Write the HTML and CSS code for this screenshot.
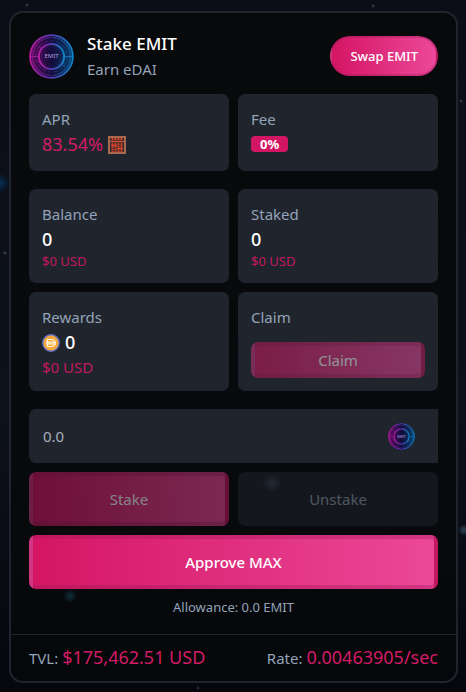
FILE: index.html
```html
<!DOCTYPE html>
<html lang="en">
<head>
    <meta charset="UTF-8">
    <meta name="viewport" content="width=device-width, initial-scale=1.0">
    <title>Stake EMIT</title>

    <link rel="stylesheet" href="styles.css">
</head>
<body>

    <!-- shared coin logo -->
    <svg class="defs" width="0" height="0" aria-hidden="true">
        <defs>
            <linearGradient id="neon" x1="0" x2="1" y1="0" y2="0">
                <stop offset="0" stop-color="#b81ca0"/>
                <stop offset="0.45" stop-color="#5a35a8"/>
                <stop offset="1" stop-color="#0e84c4"/>
            </linearGradient>
            <linearGradient id="disc" x1="0" x2="1" y1="0" y2="0">
                <stop offset="0" stop-color="#5e0c63"/>
                <stop offset="0.5" stop-color="#120c3a"/>
                <stop offset="1" stop-color="#063d6a"/>
            </linearGradient>
            <symbol id="emit" viewBox="0 0 45 45">
                <circle cx="22.5" cy="22.5" r="22.2" fill="url(#disc)"/>
                <g fill="none" stroke="url(#neon)">
                    <circle cx="22.5" cy="22.5" r="21.4" stroke-width="1.6"/>
                    <circle cx="22.5" cy="22.5" r="19" stroke-width="1.6" stroke-dasharray="3 0.5" opacity="0.5"/>
                    <circle cx="22.5" cy="22.5" r="15.6" stroke-width="0.8" stroke-dasharray="4 2" opacity="0.5"/>
                    <circle cx="22.5" cy="22.5" r="12.6" stroke-width="2"/>
                    <circle cx="22.5" cy="22.5" r="10" stroke-width="1" stroke-dasharray="1 2" opacity="0.5"/>
                    <path d="M1 22.5h8M36 22.5h8M13 15l-4-3M32 30l4 3" stroke-width="0.8"/>
                </g>
                <text x="22.5" y="24.4" text-anchor="middle" class="coin-text">EMIT</text>
            </symbol>
        </defs>
    </svg>

    <main class="card">
        <div class="content">
            <header class="head">
                <svg class="logo" role="img" aria-label="EMIT"><use href="#emit"/></svg>
                <div class="titles">
                    <h1>Stake EMIT</h1>
                    <p>Earn eDAI</p>
                </div>
                <button class="btn btn-swap" type="button">Swap EMIT</button>
            </header>

            <section class="grid">
                <div class="box">
                    <h2>APR</h2>
                    <p class="value pink">83.54%
                        <svg class="abacus" viewBox="0 0 18 18" role="img" aria-label="abacus">
                            <rect x="1" y="1" width="16" height="16" fill="#34292b" stroke="#a9694e" stroke-width="2"/>
                            <path d="M2 5.5h14" stroke="#a9694e"/>
                            <path d="M4.5 2v14M7.5 2v14M10.5 2v14M13.5 2v14" stroke="#d8432c" stroke-width="2" stroke-dasharray="2 0.6"/>
                            <path d="M3 9.5h6M9 12.5h6" stroke="#d8432c"/>
                        </svg>
                    </p>
                </div>
                <div class="box">
                    <h2>Fee</h2>
                    <span class="badge">0%</span>
                </div>
            </section>

            <section class="grid">
                <div class="box">
                    <h2>Balance</h2>
                    <p class="value">0</p>
                    <p class="usd">$0 USD</p>
                </div>
                <div class="box">
                    <h2>Staked</h2>
                    <p class="value">0</p>
                    <p class="usd">$0 USD</p>
                </div>
                <div class="box">
                    <h2>Rewards</h2>
                    <p class="value">
                        <svg class="dai" viewBox="0 0 18 18" role="img" aria-label="eDAI">
                            <circle cx="9" cy="9" r="8.2" fill="#f9a936" stroke="#6573c9" stroke-width="1.4"/>
                            <path d="M5.5 5.5h4a3.5 3.5 0 0 1 0 7h-4zM4 8.2h10M4 9.900h10" fill="none" stroke="#fff3dc" stroke-width="1.2"/>
                        </svg>
                        0</p>
                    <p class="usd usd-large">$0 USD</p>
                </div>
                <div class="box">
                    <h2>Claim</h2>
                    <button class="btn btn-claim" type="button" disabled>Claim</button>
                </div>
            </section>

            <form class="actions">
                <div class="amount">
                    <input type="text" inputmode="decimal" placeholder="0.0" aria-label="Amount">
                    <svg class="logo-small" role="img" aria-label="EMIT"><use href="#emit"/></svg>
                </div>
                <button class="btn" type="button" disabled>Stake</button>
                <button class="btn btn-dark" type="button" disabled>Unstake</button>
                <button class="btn btn-approve" type="button">Approve MAX</button>
            </form>
            <p class="allowance">Allowance: 0.0 EMIT</p>
        </div>

        <footer class="stats">
            <p>TVL: <span>$175,462.51 USD</span></p>
            <p>Rate: <span>0.00463905/sec</span></p>
        </footer>
    </main>

</body>
</html>
```
FILE: styles.css
```css
* {
    box-sizing: border-box;
}

body {
    margin: 0;
    padding: 11px 8px 10px 9px;
    font-family: "Noto Sans", "Open Sans", sans-serif;
    font-size: 15px;
    color: #94a3b8;
    background-color: #080a11;
    background-image:
        radial-gradient(circle at 0 183px, #062f57 0, transparent 10px),
        radial-gradient(circle at 464px 530px, #33465a 0, transparent 6px),
        radial-gradient(circle at 5px 253px, #4b515c 0, transparent 2px),
        radial-gradient(circle at 27px 5px, #454954 0, transparent 2px),
        radial-gradient(circle at 373px 6px, #454954 0, transparent 2px),
        radial-gradient(circle at 461px 101px, #454954 0, transparent 2px),
        radial-gradient(circle at 198px 688px, #353944 0, transparent 2px),
        linear-gradient(180deg, #0b0e16 0, #0d111b 60%, #06070d 100%);
}

h1, h2, p {
    margin: 0;
    font-weight: 400;
}

.defs {
    position: absolute;
}

.card {
    border: 2px solid #1f242d;
    border-radius: 14px;
    background:
        radial-gradient(circle at 59px 583px, #10303f 0, transparent 7px),
        radial-gradient(circle at 261px 470px, #252c33 0, transparent 10px),
        linear-gradient(180deg, #07090b, #090a0d 60%, #05080a);
}

.content {
    padding: 18px;
}

.head {
    display: flex;
    align-items: center;
    gap: 13px;
    margin-bottom: 13px;
}

.logo {
    width: 45px;
    height: 45px;
}

.coin-text {
    font-size: 6px;
    fill: #b9a0e0;
}

.titles {
    flex: 1;
}

h1 {
    font-size: 17px;
    font-weight: 500;
    line-height: 26px;
    color: #fff;
}

.titles p {
    line-height: 24px;
}

/* the gradient repeats under the see-through border */
.btn {
    height: 54px;
    padding: 0 18px;
    border: 4px solid rgba(160, 24, 90, 0.35);
    border-radius: 7px;
    font-family: inherit;
    font-size: 15px;
    color: #fff;
    background-image: linear-gradient(90deg, #d41664, #ec4899);
}

.btn:disabled {
    opacity: 0.5;
}

.btn-swap {
    height: 40px;
    border-width: 2px;
    border-radius: 20px;
    font-size: 13px;
    font-weight: 500;
}

.grid {
    display: grid;
    grid-template-columns: 1fr 1fr;
    gap: 9px;
    margin-bottom: 18px;
}

.box {
    padding: 13px;
    border-radius: 7px;
    background-color: #20252d;
}

.box h2 {
    font-size: 15px;
    line-height: 24px;
}

.value {
    display: flex;
    align-items: center;
    gap: 5px;
    font-size: 18px;
    font-weight: 500;
    line-height: 27px;
    color: #fff;
}

.value svg {
    width: 18px;
    height: 18px;
}

.pink {
    font-weight: 400;
    color: #d31b66;
}

.badge {
    display: block;
    width: fit-content;
    margin-top: 5px;
    padding: 0 9px;
    border-radius: 4px;
    font-size: 13px;
    font-weight: 700;
    line-height: 16px;
    color: #fff;
    background-color: #d31664;
}

.usd {
    font-size: 13px;
    line-height: 17px;
    color: #c2185f;
}

.usd-large {
    font-size: 15px;
    line-height: 22px;
}

.btn-claim {
    display: block;
    width: 100%;
    height: 36px;
    margin-top: 13px;
}

.actions {
    display: grid;
    grid-template-columns: 1fr 1fr;
    gap: 9px;
}

.amount {
    grid-column: span 2;
    display: flex;
    align-items: center;
    height: 54px;
    padding: 0 23px 0 14px;
    border-radius: 7px 0 0 7px;
    background-color: #20252d;
}

.amount input {
    flex: 1;
    min-width: 0;
    padding: 0;
    border: 0;
    outline: 0;
    font-family: inherit;
    font-size: 15px;
    color: #fff;
    background: none;
}

.amount input::placeholder {
    color: #a6adbb;
}

.logo-small {
    width: 27px;
    height: 27px;
}

.btn-dark {
    border: 0;
    color: #94a3b8;
    background: #20262f;
}

.btn-approve {
    grid-column: span 2;
    font-weight: 500;
}

.allowance {
    margin-top: 9px;
    font-size: 13px;
    line-height: 18px;
    text-align: center;
}

.stats {
    display: flex;
    flex-wrap: wrap;
    justify-content: space-between;
    padding: 9px 18px;
    border-top: 1px solid #1f242d;
}

.stats p {
    line-height: 27px;
}

.stats span {
    font-size: 18px;
    color: #d31b66;
}
```
